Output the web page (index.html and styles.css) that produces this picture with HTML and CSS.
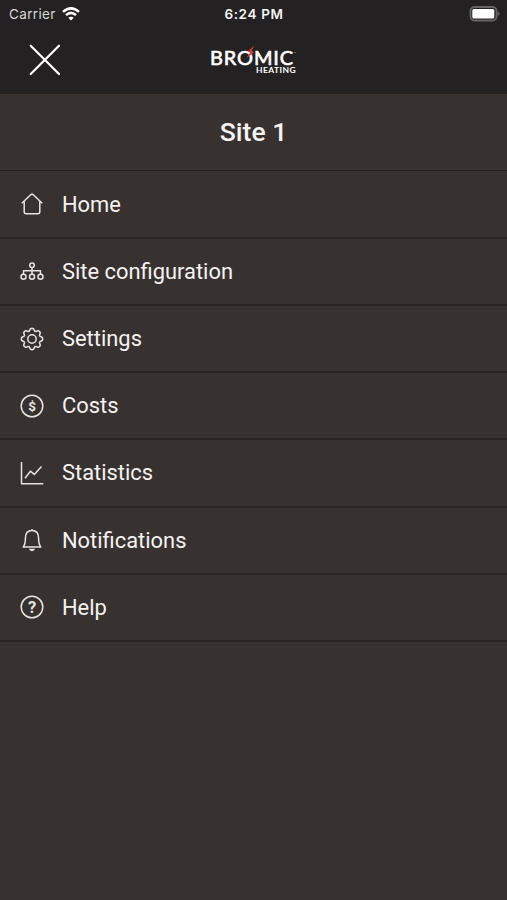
FILE: index.html
```html
<!DOCTYPE html>
<html lang="en">
<head>
<meta charset="UTF-8">
<meta name="viewport" content="width=device-width, initial-scale=1.0">
<title>Site menu</title>
<link rel="stylesheet" href="styles.css">
</head>
<body>

<header class="header">
  <!-- Status bar -->
  <div class="status-bar">
    <div class="carrier">
      <span>Carrier</span>
      <svg class="wifi" width="18" height="14" viewBox="0 0 18 14">
        <path d="M1 4.9Q9-2.2 17 4.9" />
        <path d="M4 8.1Q9 3.6 14 8.1" />
        <path class="dot" d="M6.3 10.8Q9 8.6 11.7 10.8L9 13.6Z" />
      </svg>
    </div>
    <span class="time">6:24 PM</span>
    <svg class="battery" width="32" height="16" viewBox="0 0 32 16">
      <rect class="battery-case" x="1.5" y="1" width="26" height="13.5" rx="4" />
      <path class="battery-tip" d="M28.5 5L31 7.7L28.5 10.5Z" />
      <rect class="battery-level" x="3.3" y="3" width="22" height="9.5" rx="1.5" />
    </svg>
  </div>

  <!-- Close button and logo -->
  <div class="nav-bar">
    <button class="close" type="button" aria-label="Close">
      <svg width="32" height="32" viewBox="0 0 32 32">
        <path d="M1.7 1.7L30 30M30 1.7L1.7 30" />
      </svg>
    </button>
    <svg class="logo" width="88" height="32" viewBox="0 0 88 32">
      <text class="logo-name" x="0" y="20.7" textLength="84" lengthAdjust="spacingAndGlyphs">BROMIC</text>
      <text class="logo-sub" x="46" y="29.4" textLength="40" lengthAdjust="spacingAndGlyphs">HEATING</text>
      <path class="logo-flame" d="M44.2 1.6L37.5 7.4L40.4 8.2L36 14.2L44.2 8.3L41.6 7.1Z" />
      <circle class="logo-mark" cx="85" cy="8.5" r="0.6" />
    </svg>
  </div>
</header>

<h1 class="site-title">Site 1</h1>

<!-- Menu -->
<nav class="menu">
  <a class="menu-item">
    <svg class="icon" viewBox="0 0 24 24">
      <path d="M1.8 11.3L11 2.5Q12 1.6 13 2.5L22.2 11.3M4.2 9.4V19.7Q4.2 21.7 6.2 21.7H17.8Q19.8 21.7 19.8 19.7V9.4" />
    </svg>
    <span>Home</span>
  </a>
  <a class="menu-item">
    <svg class="icon" viewBox="0 0 24 24">
      <circle cx="12" cy="6.2" r="2.3" />
      <circle cx="3.5" cy="17.7" r="2.5" />
      <circle cx="12" cy="17.7" r="2.5" />
      <circle cx="20.5" cy="17.7" r="2.5" />
      <path d="M12 8.5V15M3.5 15V11.8H20.5V15" />
    </svg>
    <span>Site configuration</span>
  </a>
  <a class="menu-item">
    <svg class="icon" viewBox="-12 -12 24 24">
      <path d="M-2.4-8.3Q-1.9-10.7 0-10.7Q1.9-10.7 2.4-8.3Q3-7.1 4.17-7.57Q6.2-8.9 7.57-7.57Q8.9-6.2 7.57-4.17Q7.1-3 8.3-2.4Q10.7-1.9 10.7 0Q10.7 1.9 8.3 2.4Q7.1 3 7.57 4.17Q8.9 6.2 7.57 7.57Q6.2 8.9 4.17 7.57Q3 7.1 2.4 8.3Q1.9 10.7 0 10.7Q-1.9 10.7-2.4 8.3Q-3 7.1-4.17 7.57Q-6.2 8.9-7.57 7.57Q-8.9 6.2-7.57 4.17Q-7.1 3-8.3 2.4Q-10.7 1.9-10.7 0Q-10.7-1.9-8.3-2.4Q-7.1-3-7.57-4.17Q-8.9-6.2-7.57-7.57Q-6.2-8.9-4.17-7.57Q-3-7.1-2.4-8.3Z" />
      <circle cx="0" cy="0" r="4.2" />
    </svg>
    <span>Settings</span>
  </a>
  <a class="menu-item">
    <svg class="icon" viewBox="0 0 24 24">
      <circle cx="12" cy="12" r="10.8" />
      <text class="icon-text dollar" x="12" y="16.8">$</text>
    </svg>
    <span>Costs</span>
  </a>
  <a class="menu-item">
    <svg class="icon" viewBox="0 0 24 24">
      <path d="M1.5 1V22.7H23.3M5 17.2L10.4 10.2L14.3 13.4L21.5 5.4" />
    </svg>
    <span>Statistics</span>
  </a>
  <a class="menu-item">
    <svg class="icon" viewBox="0 0 24 24">
      <path d="M12 1V2.3M3.2 18.9C5 17 5.4 14.5 5.4 10C5.4 5.3 8 2.5 12 2.5S18.6 5.3 18.6 10C18.6 14.5 19 17 20.8 18.9Z" />
      <path class="clapper" d="M9 20.8H15Q14.5 23.2 12 23.2T9 20.8Z" />
    </svg>
    <span>Notifications</span>
  </a>
  <a class="menu-item">
    <svg class="icon" viewBox="0 0 24 24">
      <circle cx="12" cy="12" r="10.8" />
      <text class="icon-text question" x="12" y="17.9">?</text>
    </svg>
    <span>Help</span>
  </a>
</nav>

</body>
</html>
```

FILE: styles.css
```css
* {
  box-sizing: border-box;
}

html {
  background-color: #373130;
}

body {
  margin: 0;
  height: 900px;
  overflow: hidden;
  color: #f5f3f2;
  font-family: Roboto, sans-serif;
}

.header {
  height: 94px;
  background-color: #242122;
}

/* Status bar */
.status-bar {
  display: grid;
  grid-template-columns: 1fr auto 1fr;
  align-items: center;
  height: 27px;
  padding: 0 6px 0 9px;
  font-family: Inter, sans-serif;
  font-size: 13.5px;
}

.carrier {
  display: flex;
  align-items: center;
  gap: 6px;
  color: #d8d6d6;
  letter-spacing: 0.35px;
}

.wifi {
  fill: none;
  stroke: #fff;
  stroke-width: 2.5;
}

.wifi .dot {
  fill: #fff;
  stroke: none;
}

.time {
  padding-right: 2px;
  font-weight: 600;
  letter-spacing: 0.65px;
}

.battery {
  justify-self: end;
}

.battery-case {
  fill: none;
  stroke: #666465;
  stroke-width: 1.8;
}

.battery-tip {
  fill: #666465;
}

.battery-level {
  fill: #fff;
}

/* Close button and logo */
.nav-bar {
  display: grid;
  grid-template-columns: 1fr auto 1fr;
  align-items: center;
  height: 66px;
  padding: 0 29px;
}

.close {
  width: 32px;
  height: 32px;
  padding: 0;
  border: 0;
  background: none;
}

.close svg {
  display: block;
  fill: none;
  stroke: #fff;
  stroke-width: 2.2;
  stroke-linecap: round;
}

.logo-name {
  fill: #fff;
  stroke: #fff;
  stroke-width: 0.6;
  font-family: Lato, sans-serif;
  font-size: 18.5px;
  font-weight: 400;
  letter-spacing: 0.8px;
}

.logo-sub {
  fill: #fff;
  font-family: Lato, sans-serif;
  font-size: 8px;
  font-weight: 700;
  letter-spacing: 0.4px;
}

.logo-flame {
  fill: #d93a2b;
}

.logo-mark {
  fill: #aaa;
}

/* Site name */
.site-title {
  height: 76px;
  margin: 0;
  font-size: 26.5px;
  font-weight: 500;
  line-height: 75px;
  text-align: center;
}

/* Menu rows */
.menu {
  padding-top: 0.6px;
  border-top: 1px solid #241f1f;
}

.menu-item {
  display: flex;
  align-items: center;
  gap: 18.5px;
  height: 67.2px;
  padding-left: 19.5px;
  border-bottom: 2px solid #2a2525;
  font-size: 21.9px;
}

.icon {
  width: 24px;
  height: 24px;
  fill: none;
  stroke: #e6e3e1;
  stroke-width: 1.5;
  stroke-linejoin: round;
}

.icon-text {
  fill: #e6e3e1;
  stroke: none;
  font-weight: 700;
  text-anchor: middle;
}

.dollar {
  font-size: 13.5px;
}

.question {
  font-size: 16.5px;
}

.clapper {
  fill: #e6e3e1;
  stroke: none;
}
```
